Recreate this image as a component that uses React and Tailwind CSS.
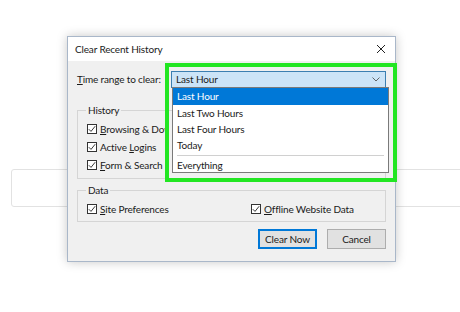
import React from 'react';

const font = { fontFamily: 'Lato, "Noto Sans", sans-serif' };

function Check() {
  return (
    <span className="w-[10px] h-[10px] border border-[#333] bg-white flex items-center justify-center shrink-0">
      <svg width="8" height="8" viewBox="0 0 8 8" fill="none">
        <path d="M0.8 4.2 L3 6.4 L7.2 1.2" stroke="#222" strokeWidth="0.9" />
      </svg>
    </span>
  );
}

function Row({ pre = '', k, rest }) {
  return (
    <div className="flex items-center gap-[3px] h-[14px] whitespace-nowrap">
      <Check />
      <span>
        {pre}
        <span className="underline">{k}</span>
        {rest}
      </span>
    </div>
  );
}

export default function App() {
  return (
    <div
      className="w-[460px] h-[312px] relative bg-white overflow-hidden text-[10px] tracking-[-0.15px] text-[#1a1a1a]"
      style={font}
    >
      {/* faint page element behind the dialog */}
      <div className="pt-[169px] pl-[11px]">
        <div className="h-[38px] border border-[#e2e2e2] rounded-[3px] -mr-[10px]" />
      </div>

      {/* dialog window */}
      <div className="absolute left-[67px] top-[36px] w-[329px] h-[226px] border border-[#a9b7c9] bg-[#f0f0f0] shadow-[0_0_10px_rgba(0,0,0,0.22)] flex flex-col">
        <div className="h-[24px] bg-white flex items-center justify-between pl-[7px] pr-[9px] shrink-0">
          <span>Clear Recent History</span>
          <svg width="10" height="10" viewBox="0 0 10 10">
            <path d="M1 1 L9 9 M9 1 L1 9" stroke="#222" strokeWidth="1" />
          </svg>
        </div>

        <div className="flex-1 pt-[10px] pl-[9px] pr-[9px] flex flex-col">
          <div className="flex items-center h-[17px]">
            <span className="w-[95px] whitespace-nowrap">
              <span className="underline">T</span>ime range to clear:
            </span>
            <div className="w-[217px] h-[17px] border border-[#3c7fb1] bg-[#cce4f7] flex items-center justify-between pl-[4px] pr-[5px]">
              <span>Last Hour</span>
              <svg width="8" height="5" viewBox="0 0 8 5" fill="none">
                <path d="M0.5 0.5 L4 4 L7.5 0.5" stroke="#555" strokeWidth="0.9" />
              </svg>
            </div>
          </div>

          <fieldset className="mt-[15px] border border-[#d5d5d5] pt-[5px] pb-[6px]">
            <legend className="ml-[8px] px-[2px] leading-[14px]">History</legend>
            <div className="pl-[9px] w-[90px] overflow-hidden flex flex-col gap-[4px]">
              <Row k="B" rest="rowsing & Download History" />
              <Row pre="Active " k="L" rest="ogins" />
              <Row k="F" rest="orm & Search History" />
            </div>
          </fieldset>

          <fieldset className="mt-[4px] border border-[#d5d5d5] pt-[5px] pb-[5px]">
            <legend className="ml-[8px] px-[2px] leading-[14px]">Data</legend>
            <div className="pl-[9px] flex items-center">
              <div className="w-[164px]">
                <Row k="S" rest="ite Preferences" />
              </div>
              <Row k="O" rest="ffline Website Data" />
            </div>
          </fieldset>

          <div className="mt-[7px] flex justify-end gap-[10px]">
            <button className="w-[59px] h-[20px] border-2 border-[#0078d7] bg-[#e1e1e1] flex items-center justify-center">
              Clear Now
            </button>
            <button className="w-[59px] h-[20px] border border-[#adadad] bg-[#e1e1e1] flex items-center justify-center">
              Cancel
            </button>
          </div>
        </div>

        {/* open dropdown list */}
        <div className="absolute left-[104px] top-[50px] w-[217px] h-[86px] bg-white border border-[#7a7a7a] flex flex-col">
          <div className="h-[17px] bg-[#0078d7] text-white flex items-center pl-[4px]">Last Hour</div>
          <div className="h-[16px] flex items-center pl-[4px]">Last Two Hours</div>
          <div className="h-[16px] flex items-center pl-[4px]">Last Four Hours</div>
          <div className="h-[16px] flex items-center pl-[4px]">Today</div>
          <div className="mx-[4px] my-[2px] border-t border-[#d0d0d0]" />
          <div className="h-[14px] flex items-center pl-[4px]">Everything</div>
        </div>

        {/* green highlight */}
        <div className="absolute left-[97px] top-[26px] w-[232px] h-[119px] border-[4px] border-[#22e622]" />
      </div>
    </div>
  );
}
